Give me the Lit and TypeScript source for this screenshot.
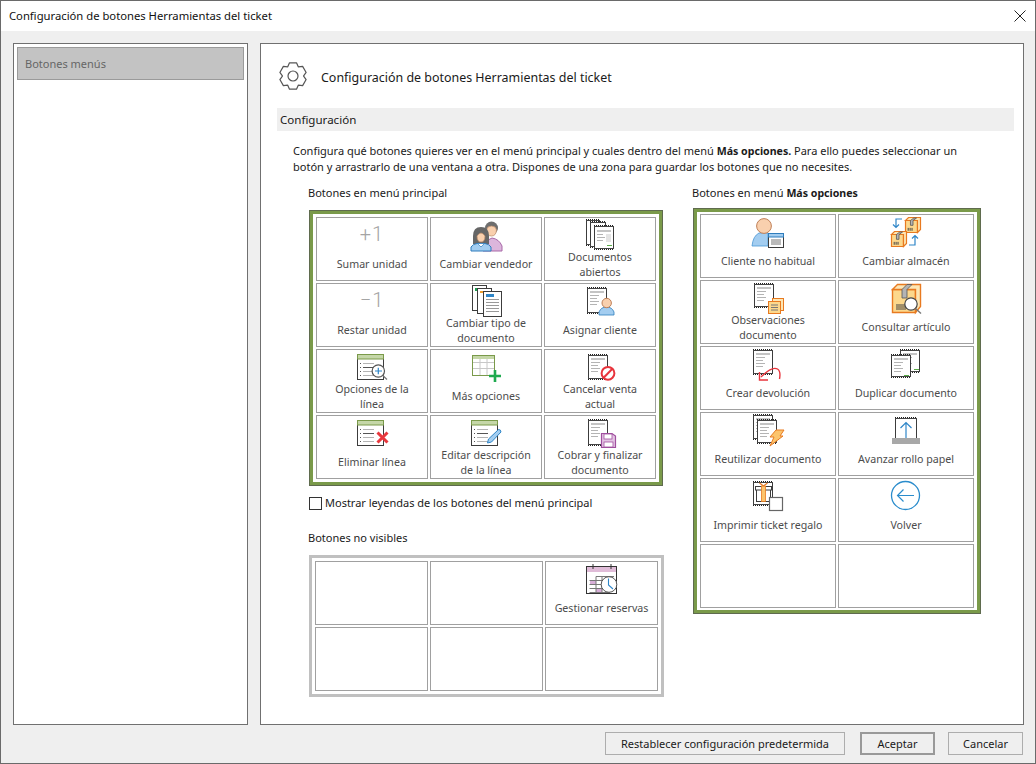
import { LitElement, html, svg, css, nothing } from 'lit';
import { customElement, property } from 'lit/decorators.js';

const DARK = '#3c3c3c';
const LINE = '#b4b4b4';

/** Ticket outline: solid sides, with a dark sawtooth look on the torn top and bottom edge. */
function ticketEdge(x: number, y: number, w: number, h: number) {
  const teeth = (ry: number) =>
    svg`<path d="M${x} ${ry}H${x + w}" stroke="#222" stroke-dasharray="1 1" />`;
  const solid = (ry: number) => svg`<path d="M${x} ${ry}H${x + w}" stroke="#444" />`;
  return svg`
    <rect x=${x} y=${y + 1} width=${w} height=${h - 2} fill="#fff" />
    <path d="M${x + 0.5} ${y + 1}V${y + h - 1}M${x + w - 0.5} ${y + 1}V${y + h - 1}" stroke=${DARK} />
    ${teeth(y + 0.5)} ${solid(y + 1.5)} ${solid(y + h - 1.5)} ${teeth(y + h - 0.5)}
  `;
}

function ticket(x: number, y: number, w: number, h: number, body = true) {
  const rows = [6, 9, 12, 15];
  return svg`
    ${ticketEdge(x, y, w, h)}
    ${body
      ? svg`
        <rect x=${x + 3} y=${y + 4} width=${w - 6} height="2" fill="#c4c4c4" />
        ${rows.map(r => svg`<rect x=${x + 3} y=${y + r + 2} width=${r % 2 ? w - 13 : w - 11} height="1" fill=${LINE} />`)}
      `
      : nothing}
  `;
}

/** Page with a light green header and dotted rows, used by the line icons. */
function linePage(x: number, y: number, w: number, h: number) {
  const rows = [9, 13, 17, 21];
  return svg`
    <rect x=${x + 0.5} y=${y + 0.5} width=${w} height=${h} fill="#fff" stroke=${DARK} />
    <rect x=${x + 0.5} y=${y + 0.5} width=${w} height="4.5" fill="#c5d7a8" stroke="#7a9a4a" />
    ${rows.map(
      r => svg`
        <rect x=${x + 3} y=${y + r} width="1" height="1" fill="#555" />
        <rect x=${x + 6} y=${y + r} width="11" height="1" fill=${r === 13 ? '#555' : LINE} />
      `,
    )}
  `;
}

function box(x: number, y: number, s: number) {
  const d = s * 0.22;
  return svg`
    <path d="M${x + 0.5} ${y + d}H${x + s - d}V${y + s - 0.5}H${x + 0.5}Z" fill="#fcd88c" stroke="#e87a20" stroke-width="1.2" />
    <path d="M${x + 0.5} ${y + d}L${x + d} ${y + 0.5}H${x + s - 0.5}V${y + s - d}L${x + s - d} ${y + s - 0.5}V${y + d}Z" fill="#fde6b4" stroke="#e87a20" stroke-width="1.2" />
    <path d="M${x + s * 0.34} ${y + s * 0.52}V${y + d}L${x + s * 0.55} ${y + 1}H${x + s * 0.72}L${x + s * 0.5} ${y + d}V${y + s * 0.52}Z" fill="#b4b4b4" stroke="#555" stroke-width="0.8" />
    <path d="M${x + s * 0.2} ${y + s * 0.68}v${s * 0.18}M${x + s * 0.32} ${y + s * 0.68}v${s * 0.18}M${x + s * 0.44} ${y + s * 0.68}v${s * 0.18}" stroke="#444" stroke-width="1" />
  `;
}

function gearPath() {
  const cx = 16;
  const cy = 14;
  const teeth = 6;
  let d = '';
  for (let i = 0; i < teeth; i++) {
    const a = (i * Math.PI * 2) / teeth - Math.PI / 2;
    const pts: [number, number][] = [
      [a - 0.52, 10.6],
      [a - 0.26, 13.6],
      [a + 0.26, 13.6],
      [a + 0.52, 10.6],
    ];
    pts.forEach(([t, r], j) => {
      const px = (cx + r * Math.cos(t)).toFixed(2);
      const py = (cy + r * Math.sin(t)).toFixed(2);
      d += `${i === 0 && j === 0 ? 'M' : 'L'}${px} ${py}`;
    });
  }
  return d + 'Z';
}

const ICONS: Record<string, unknown> = {
  vendedor: svg`
    <path d="M15 32V27Q19 20 24 19Q31 20 34 27V32Z" fill="#dcb6dc" stroke="#a868a8" />
    <circle cx="23.5" cy="9" r="6.5" fill="#6e6e6e" />
    <path d="M18.5 11Q19 7 23.5 7Q28 7 28.5 11Q28 17 23.5 17Q19 17 18.5 11Z" fill="#f9d0ae" stroke="#b98a68" stroke-width=".7" />
    <path d="M5 17Q5 8 13 8Q21 8 21 17V25H5Z" fill="#666" />
    <path d="M9 17Q11 14 13 14Q15 14 17 17Q17 23 13 23Q9 23 9 17Z" fill="#f9d0ae" stroke="#b98a68" stroke-width=".7" />
    <path d="M3 32V28Q5 25 9 24.5H17Q21 25 23 28V32Z" fill="#a3cdf0" stroke="#2f7dbd" />
    <path d="M9.5 24.5H16.5L13 28Z" fill="#fff" stroke="#2f7dbd" stroke-width=".7" />
  `,
  abiertos: svg`
    ${ticket(4, 0, 14, 27, false)}
    ${ticket(8, 2, 16, 27, false)}
    ${ticket(12, 6, 20, 25, false)}
    <rect x="15" y="11" width="14" height="2" fill="#c4c4c4" />
    <rect x="15" y="15" width="6" height="1" fill=${LINE} />
    <rect x="15" y="18" width="8" height="1" fill=${LINE} />
    <rect x="15" y="21" width="6" height="1" fill=${LINE} />
    <rect x="24" y="15" width="5" height="8" fill="#e4e4e4" />
    <rect x="25" y="26" width="5" height="1" fill="#5cae4a" />
  `,
  tipo: svg`
    <rect x="4.5" y=".5" width="14" height="25" fill="#fff" stroke=${DARK} />
    <rect x="7" y="3" width="3" height="3" fill="#1f9e50" />
    <rect x="9.5" y="3.5" width="14" height="25" fill="#fff" stroke=${DARK} />
    <rect x="12" y="6" width="3" height="2" fill="#f0a030" />
    <rect x="15.5" y="6.5" width="18" height="25" fill="#fff" stroke=${DARK} />
    <rect x="18" y="9" width="8" height="3" fill="#2f86c8" />
    ${[14, 17, 20, 23, 26].map(r => svg`<rect x="18" y=${r} width="13" height="1" fill="#999" />`)}
  `,
  asignar: svg`
    ${ticket(5, 2, 20, 27)}
    <path d="M17 30V27Q19 22 24.5 22Q30 22 32 27V30Z" fill="#a3cdf0" stroke="#2f7dbd" stroke-width=".8" />
    <circle cx="24.7" cy="18" r="4.7" fill="#f9d0ae" stroke="#c08058" />
  `,
  opciones: svg`
    ${linePage(3, 3, 26, 25)}
    <circle cx="24.3" cy="20" r="6.2" fill="#fff" stroke="#555" stroke-width="1.2" />
    <path d="M21 20H28M24.3 16.7V23.3" stroke="#2f86c8" stroke-width="1.2" />
    <path d="M28.8 24.6L33 28.5" stroke="#777" stroke-width="1.3" />
  `,
  mas: svg`
    <rect x="4.5" y="4.5" width="22" height="20" fill="#fff" stroke="#7a9a4a" />
    <rect x="5" y="5" width="21" height="3" fill="#c5d7a8" />
    <path d="M5 11.5H26M5 17.5H26M12 8V24M19 8V24" stroke="#c8c8c8" />
    <rect x="4.5" y="4.5" width="22" height="20" fill="none" stroke="#7a9a4a" />
    <path d="M21 25H33M27 19V31" stroke="#1faa4f" stroke-width="2.6" />
  `,
  cancelar: svg`
    ${ticket(6, 3, 20, 26)}
    <circle cx="26" cy="22.3" r="6.4" fill="#fff" stroke="#e8343c" stroke-width="2" />
    <path d="M21.6 26.8L30.4 17.8" stroke="#e8343c" stroke-width="2" />
  `,
  eliminar: svg`
    ${linePage(3, 3, 26, 25)}
    <path d="M23.5 15.5L33.5 25.5M33.5 15.5L23.5 25.5" stroke="#e8383e" stroke-width="3" />
  `,
  editar: svg`
    ${linePage(3, 3, 26, 25)}
    <path d="M19.5 26L20.5 22L30.5 12.5Q33 12.5 33 15L23.5 25Z" fill="#a3cdf0" stroke="#2f86c8" />
  `,
  cobrar: svg`
    ${ticket(6, 2, 20, 27)}
    <path d="M19.5 16.5H30L33.5 19V30.5H19.5Z" fill="#e4c4e4" stroke="#a0509f" stroke-width="1.2" />
    <rect x="22" y="17" width="8" height="5" fill="#fff" stroke="#a0509f" stroke-width=".8" />
    <rect x="22" y="25" width="9" height="5" fill="#fff" stroke="#a0509f" stroke-width=".8" />
  `,
  cliente: svg`
    <path d="M2 30Q3 20 9 17H18V30Z" fill="#a3cdf0" stroke="#4a97d4" stroke-width=".8" />
    <circle cx="14" cy="10" r="7.4" fill="#f9d0ae" stroke="#c08058" />
    <rect x="18.5" y="17.5" width="15" height="14" fill="#fff" stroke=${DARK} />
    <rect x="18.5" y="17.5" width="15" height="3.5" fill="#a3cdf0" stroke="#2f7dbd" />
    <path d="M21 24H31M21 26H31M21 28H31" stroke="#777" />
  `,
  almacen: svg`
    ${box(17, 1, 16)} ${box(3, 15, 16)}
    <path d="M14 3H8V11M5 8.5L8 11.5L11 8.5" fill="none" stroke="#2f86c8" stroke-width="1.2" />
    <path d="M21 29H27V20M24 22.5L27 19.5L30 22.5" fill="none" stroke="#2f86c8" stroke-width="1.2" />
  `,
  observaciones: svg`
    ${ticket(4, 1, 20, 25)}
    <rect x="22.5" y="16.5" width="11" height="12" fill="#fde6b4" stroke="#e87a20" />
    <rect x="18.5" y="19.5" width="12" height="12" fill="#fcd88c" stroke="#e87a20" />
    <path d="M21 23H28M21 25.5H28M21 28H28" stroke="#777" />
  `,
  consultar: svg`
    <path d="M4.5 7.5H27.5V30.5H4.5Z" fill="#fcd88c" stroke="#e87a20" stroke-width="1.4" />
    <path d="M4.5 7.5L9.5 2.5H32.5V24.5L27.5 30.5V7.5Z" fill="#fde6b4" stroke="#e87a20" stroke-width="1.4" />
    <path d="M14 16V7.5L19 2.5H24L19 7.5V16Z" fill="#b4b4b4" stroke="#555" stroke-width=".8" />
    <path d="M9 22v6M11 22v6M13 22v6M15 22v6M17 22v6" stroke="#444" />
    <circle cx="23" cy="22" r="6.2" fill="#fff" stroke="#444" stroke-width="1.2" />
    <path d="M27.5 26.5L33 31.5" stroke="#777" stroke-width="1.4" />
  `,
  devolucion: svg`
    ${ticket(3, 1, 20, 26)}
    <path d="M29.5 31Q31 23 27.5 21Q22 18 11 29" fill="none" stroke="#e8343c" stroke-width="1.4" />
    <path d="M9.5 24V32H18" fill="none" stroke="#e8343c" stroke-width="1.4" />
  `,
  duplicar: svg`
    ${ticket(12, 1, 20, 24)} ${ticket(3, 6, 20, 24)}
    <rect x="16" y="27" width="5" height="1" fill="#5cae4a" />
    <rect x="26" y="21" width="5" height="1" fill="#5cae4a" />
  `,
  reutilizar: svg`
    ${ticket(3, 0, 20, 26)} ${ticket(7, 5, 20, 25)}
    <path d="M26 16H34L30 22H33L20 32L24 23H20Z" fill="#fcc46c" stroke="#e87a20" />
  `,
  avanzar: svg`
    ${ticketEdge(7, 3, 22, 26)}
    <rect x="4" y="24" width="28" height="6" fill="#a8a8a8" />
    <path d="M18 24V8.5M12.5 14L18 8.5L23.5 14" fill="none" stroke="#2f86c8" stroke-width="1.2" />
  `,
  regalo: svg`
    ${ticket(3, 1, 20, 25, false)}
    <rect x="6.5" y="9.5" width="14" height="12" fill="#fff" stroke=${DARK} />
    <rect x="5.5" y="6.5" width="16" height="3.5" fill="#fff" stroke=${DARK} />
    <rect x="11.5" y="6" width="4" height="15.5" fill="#fcc46c" stroke="#e87a20" stroke-width=".8" />
    <path d="M13.5 6L9.5 3M13.5 6L17.5 3" stroke="#e87a20" stroke-width="1.2" />
    <rect x="19.5" y="17.5" width="13" height="13" fill="#fff" stroke="#666" stroke-width="1.2" />
  `,
  volver: svg`
    <circle cx="17.5" cy="15.5" r="14" fill="#fff" stroke="#2a8ccc" stroke-width="1.3" />
    <path d="M26 15.5H9.5M15.5 9.5L9.5 15.5L15.5 21.5" fill="none" stroke="#2a8ccc" stroke-width="1.2" />
  `,
  reservas: svg`
    <rect x="2.5" y="3.5" width="30" height="27" fill="#fff" stroke="#333" />
    <rect x="3" y="4" width="29" height="5" fill="#e0bcd8" />
    <path d="M9 1V6M27 1V6" stroke="#333" />
    <rect x="6" y="14" width="25" height="16" fill="#fff" />
    <rect x="6" y="17" width="6" height="4" fill="#d8aed8" />
    <rect x="12" y="25" width="6" height="4" fill="#d8aed8" />
    <path d="M5.500 17.500H30M5.500 21.500H26M5.500 25.500H26M5.500 29.500H26M12 13.500V30M18 13.500V30M12 13.500H30M24 13.500V20" fill="none" stroke="#777" />
    <circle cx="25" cy="21.500" r="7.800" fill="#fff" stroke="#555" />
    <path d="M24.500 15.500V22L29 26" fill="none" stroke="#2f86c8" stroke-width="1.100" />
  `,
};

@customElement('menu-cell')
export class MenuCell extends LitElement {
  @property() label = '';
  @property() icon = '';
  @property() counter = '';

  static override styles = css`
    :host {
      display: flex;
      flex-direction: column;
      align-items: center;
      box-sizing: border-box;
      height: 64px;
      border: 1px solid #a0a0a0;
      background: #fff;
      overflow: hidden;
    }

    .glyph {
      display: block;
      width: 36px;
      height: 34px;
      margin-top: 1px;
      flex: none;
    }

    .counter {
      height: 32px;
      margin-top: 3px;
      flex: none;
      font: 300 20px/26px Roboto, sans-serif;
      color: #a4a4a4;
      letter-spacing: 1px;
    }

    .label {
      flex: 1;
      display: flex;
      align-items: center;
      justify-content: center;
      margin-top: -3px;
      padding: 0 7px 2px;
      text-align: center;
      font-size: 10.65px;
      line-height: 15px;
      color: #4c4c4c;
    }
  `;

  override render() {
    if (!this.label) return nothing;
    const glyph = this.counter
      ? html`<div class="counter">${this.counter}</div>`
      : html`<svg class="glyph" viewBox="0 0 36 34">${ICONS[this.icon]}</svg>`;
    return html`${glyph}<div class="label">${this.label}</div>`;
  }
}

type CellData = { label?: string; icon?: string; counter?: string };

const MAIN_MENU: CellData[] = [
  { label: 'Sumar unidad', counter: '+1' },
  { label: 'Cambiar vendedor', icon: 'vendedor' },
  { label: 'Documentos abiertos', icon: 'abiertos' },
  { label: 'Restar unidad', counter: '−1' },
  { label: 'Cambiar tipo de documento', icon: 'tipo' },
  { label: 'Asignar cliente', icon: 'asignar' },
  { label: 'Opciones de la línea', icon: 'opciones' },
  { label: 'Más opciones', icon: 'mas' },
  { label: 'Cancelar venta actual', icon: 'cancelar' },
  { label: 'Eliminar línea', icon: 'eliminar' },
  { label: 'Editar descripción de la línea', icon: 'editar' },
  { label: 'Cobrar y finalizar documento', icon: 'cobrar' },
];

const MORE_MENU: CellData[] = [
  { label: 'Cliente no habitual', icon: 'cliente' },
  { label: 'Cambiar almacén', icon: 'almacen' },
  { label: 'Observaciones documento', icon: 'observaciones' },
  { label: 'Consultar artículo', icon: 'consultar' },
  { label: 'Crear devolución', icon: 'devolucion' },
  { label: 'Duplicar documento', icon: 'duplicar' },
  { label: 'Reutilizar documento', icon: 'reutilizar' },
  { label: 'Avanzar rollo papel', icon: 'avanzar' },
  { label: 'Imprimir ticket regalo', icon: 'regalo' },
  { label: 'Volver', icon: 'volver' },
  {},
  {},
];

const HIDDEN: CellData[] = [
  {},
  {},
  { label: 'Gestionar reservas', icon: 'reservas' },
  {},
  {},
  {},
];

@customElement('app-root')
export class AppRoot extends LitElement {
  static override styles = css`
    :host {
      display: flex;
      flex-direction: column;
      width: 1036px;
      height: 764px;
      box-sizing: border-box;
      background: #efefef;
      font: 11px/16px 'Noto Sans', sans-serif;
      color: #1a1a1a;
      border: 1px solid #6a6a6a;
      overflow: hidden;
    }

    b {
      font-size: 10.6px;
    }

    .titlebar {
      display: flex;
      align-items: center;
      justify-content: space-between;
      height: 30px;
      flex: none;
      padding: 0 9px 0 8px;
      background: #fff;
      font-size: 11.25px;
      color: #111;
    }

    .close {
      display: block;
      width: 12px;
      height: 12px;
    }

    .body {
      flex: none;
      display: flex;
      gap: 12px;
      padding: 12px 11px 0 12px;
    }

    .sidebar {
      box-sizing: border-box;
      width: 235px;
      height: 682px;
      flex: none;
      padding: 3px;
      background: #fff;
      border: 1px solid #707070;
    }

    .side-item {
      box-sizing: border-box;
      height: 33px;
      padding: 1px 0 0 7px;
      display: flex;
      align-items: center;
      background: #c3c3c3;
      border: 1px solid #9a9a9a;
      color: #666;
    }

    .panel {
      box-sizing: border-box;
      width: 764px;
      height: 682px;
      flex: none;
      padding: 18px 9px 0 16px;
      background: #fff;
      border: 1px solid #707070;
    }

    .head {
      display: flex;
      align-items: center;
      gap: 14px;
      height: 30px;
      font-size: 12.45px;
    }

    .head span {
      padding-top: 2px;
    }

    .gear {
      display: block;
      width: 30px;
      height: 30px;
    }

    .section {
      height: 23px;
      margin-top: 16px;
      padding-left: 3px;
      display: flex;
      align-items: center;
      background: #efefef;
      font-size: 11.55px;
    }

    .intro {
      margin: 12px 0 0 16px;
      white-space: nowrap;
    }

    .columns {
      display: flex;
      gap: 29px;
      margin: 10px 0 0 32px;
    }

    .column {
      display: flex;
      flex-direction: column;
    }

    .caption {
      height: 16px;
      margin-left: -1px;
    }

    .grid {
      display: grid;
      gap: 2px;
      box-sizing: border-box;
      background: #fff;
    }

    .main {
      grid-template-columns: repeat(3, 112px);
      width: 354px;
      margin-top: 9px;
      padding: 3px;
      border: 4px solid #7a9a4a;
      outline: 1px solid #5f6b4e;
      outline-offset: -1px;
    }

    .more {
      grid-template-columns: repeat(2, 136px);
      width: 288px;
      margin-top: 7px;
      padding: 2px 3px;
      border: 4px solid #7a9a4a;
      outline: 1px solid #5f6b4e;
      outline-offset: -1px;
    }

    .hidden {
      grid-template-columns: repeat(3, 113px);
      width: 355px;
      margin-top: 9px;
      padding: 3px;
      border: 3px solid #c0c0c0;
    }

    .check {
      display: flex;
      align-items: center;
      gap: 3px;
      margin-top: 9px;
      height: 16px;
    }

    .box {
      box-sizing: border-box;
      width: 13px;
      height: 13px;
      border: 1px solid #333;
      background: #fff;
    }

    .hidden-caption {
      margin-top: 19px;
    }

    .footer {
      display: flex;
      justify-content: flex-end;
      gap: 13px;
      padding: 7px 12px 0 0;
    }

    .btn {
      box-sizing: border-box;
      height: 23px;
      display: flex;
      align-items: center;
      justify-content: center;
      border: 1px solid #adadad;
      background: #efefef;
    }

    .reset {
      width: 240px;
      margin-right: 2px;
    }

    .ok {
      width: 75px;
      border: 2px solid #999;
    }

    .cancel {
      width: 75px;
    }
  `;

  private cells(items: CellData[]) {
    return items.map(
      c => html`<menu-cell .label=${c.label ?? ''} .icon=${c.icon ?? ''} .counter=${c.counter ?? ''}></menu-cell>`,
    );
  }

  override render() {
    return html`
      <div class="titlebar">
        <span>Configuración de botones Herramientas del ticket</span>
        <svg class="close" viewBox="0 0 12 12"><path d="M.5 .5L11.500 11.500M11.500 .5L.5 11.500" stroke="#222" /></svg>
      </div>
      <div class="body">
        <div class="sidebar"><div class="side-item">Botones menús</div></div>
        <div class="panel">
          <div class="head">
            <svg class="gear" viewBox="0 0 30 30">
              <path d=${gearPath()} fill="none" stroke="#555" stroke-width="1.2" stroke-linejoin="round" />
              <circle cx="16" cy="14" r="5" fill="none" stroke="#555" stroke-width="1.2" />
            </svg>
            <span>Configuración de botones Herramientas del ticket</span>
          </div>
          <div class="section">Configuración</div>
          <div class="intro">
            Configura qué botones quieres ver en el menú principal y cuales dentro del menú <b>Más opciones.</b> Para
            ello puedes seleccionar un<br />botón y arrastrarlo de una ventana a otra. Dispones de una zona para guardar
            los botones que no necesites.
          </div>
          <div class="columns">
            <div class="column">
              <div class="caption">Botones en menú principal</div>
              <div class="grid main">${this.cells(MAIN_MENU)}</div>
              <div class="check"><div class="box"></div>Mostrar leyendas de los botones del menú principal</div>
              <div class="caption hidden-caption">Botones no visibles</div>
              <div class="grid hidden">${this.cells(HIDDEN)}</div>
            </div>
            <div class="column">
              <div class="caption">Botones en menú <b>Más opciones</b></div>
              <div class="grid more">${this.cells(MORE_MENU)}</div>
            </div>
          </div>
        </div>
      </div>
      <div class="footer">
        <div class="btn reset">Restablecer configuración predetermida</div>
        <div class="btn ok">Aceptar</div>
        <div class="btn cancel">Cancelar</div>
      </div>
    `;
  }
}
